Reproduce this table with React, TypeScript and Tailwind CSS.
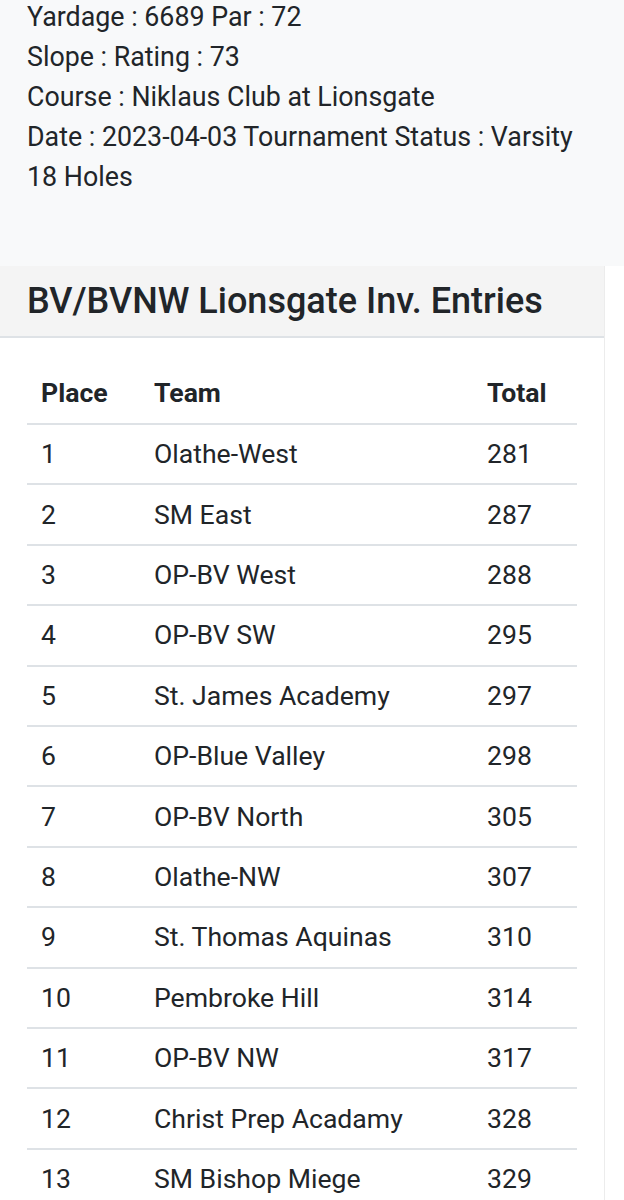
const INFO = [
  "Yardage : 6689 Par : 72",
  "Slope : Rating : 73",
  "Course : Niklaus Club at Lionsgate",
  "Date : 2023-04-03 Tournament Status : Varsity",
  "18 Holes",
];

const ROWS: [number, string, number][] = [
  [1, "Olathe-West", 281],
  [2, "SM East", 287],
  [3, "OP-BV West", 288],
  [4, "OP-BV SW", 295],
  [5, "St. James Academy", 297],
  [6, "OP-Blue Valley", 298],
  [7, "OP-BV North", 305],
  [8, "Olathe-NW", 307],
  [9, "St. Thomas Aquinas", 310],
  [10, "Pembroke Hill", 314],
  [11, "OP-BV NW", 317],
  [12, "Christ Prep Acadamy", 328],
  [13, "SM Bishop Miege", 329],
];

export default function App() {
  return (
    <div className="min-h-screen overflow-hidden bg-white text-[#212529] font-['Roboto',sans-serif]">
      <div className="flex h-[266px] flex-col bg-[#f8f9fa] px-[27px]">
        <div className="-mt-[3px] flex flex-col text-[26.8px] leading-[40px]">
          {INFO.map((line) => (
            <p key={line}>{line}</p>
          ))}
        </div>
      </div>

      <div className="w-[605px] border-r border-[#ececec]">
        <div className="flex h-[72px] items-center border-b-2 border-[#dee2e6] bg-[#f4f4f4] px-[27px]">
          <h2 className="text-[36px] font-medium leading-none">BV/BVNW Lionsgate Inv. Entries</h2>
        </div>

        <div className="ml-[27px] mt-[25px] w-[550px]">
          <div className="grid h-[60px] grid-cols-[113px_333px_1fr] items-center text-[26.6px] font-bold">
            <span className="pl-[14px]">Place</span>
            <span className="pl-[14px]">Team</span>
            <span className="pl-[14px]">Total</span>
          </div>
          {ROWS.map(([place, team, total]) => (
            <div
              key={place}
              className="grid h-[60.4px] grid-cols-[113px_333px_1fr] items-center border-t-2 border-[#dee2e6] text-[26.6px]"
            >
              <span className="pl-[14px]">{place}</span>
              <span className="pl-[14px]">{team}</span>
              <span className="pl-[14px]">{total}</span>
            </div>
          ))}
        </div>
      </div>
    </div>
  );
}
